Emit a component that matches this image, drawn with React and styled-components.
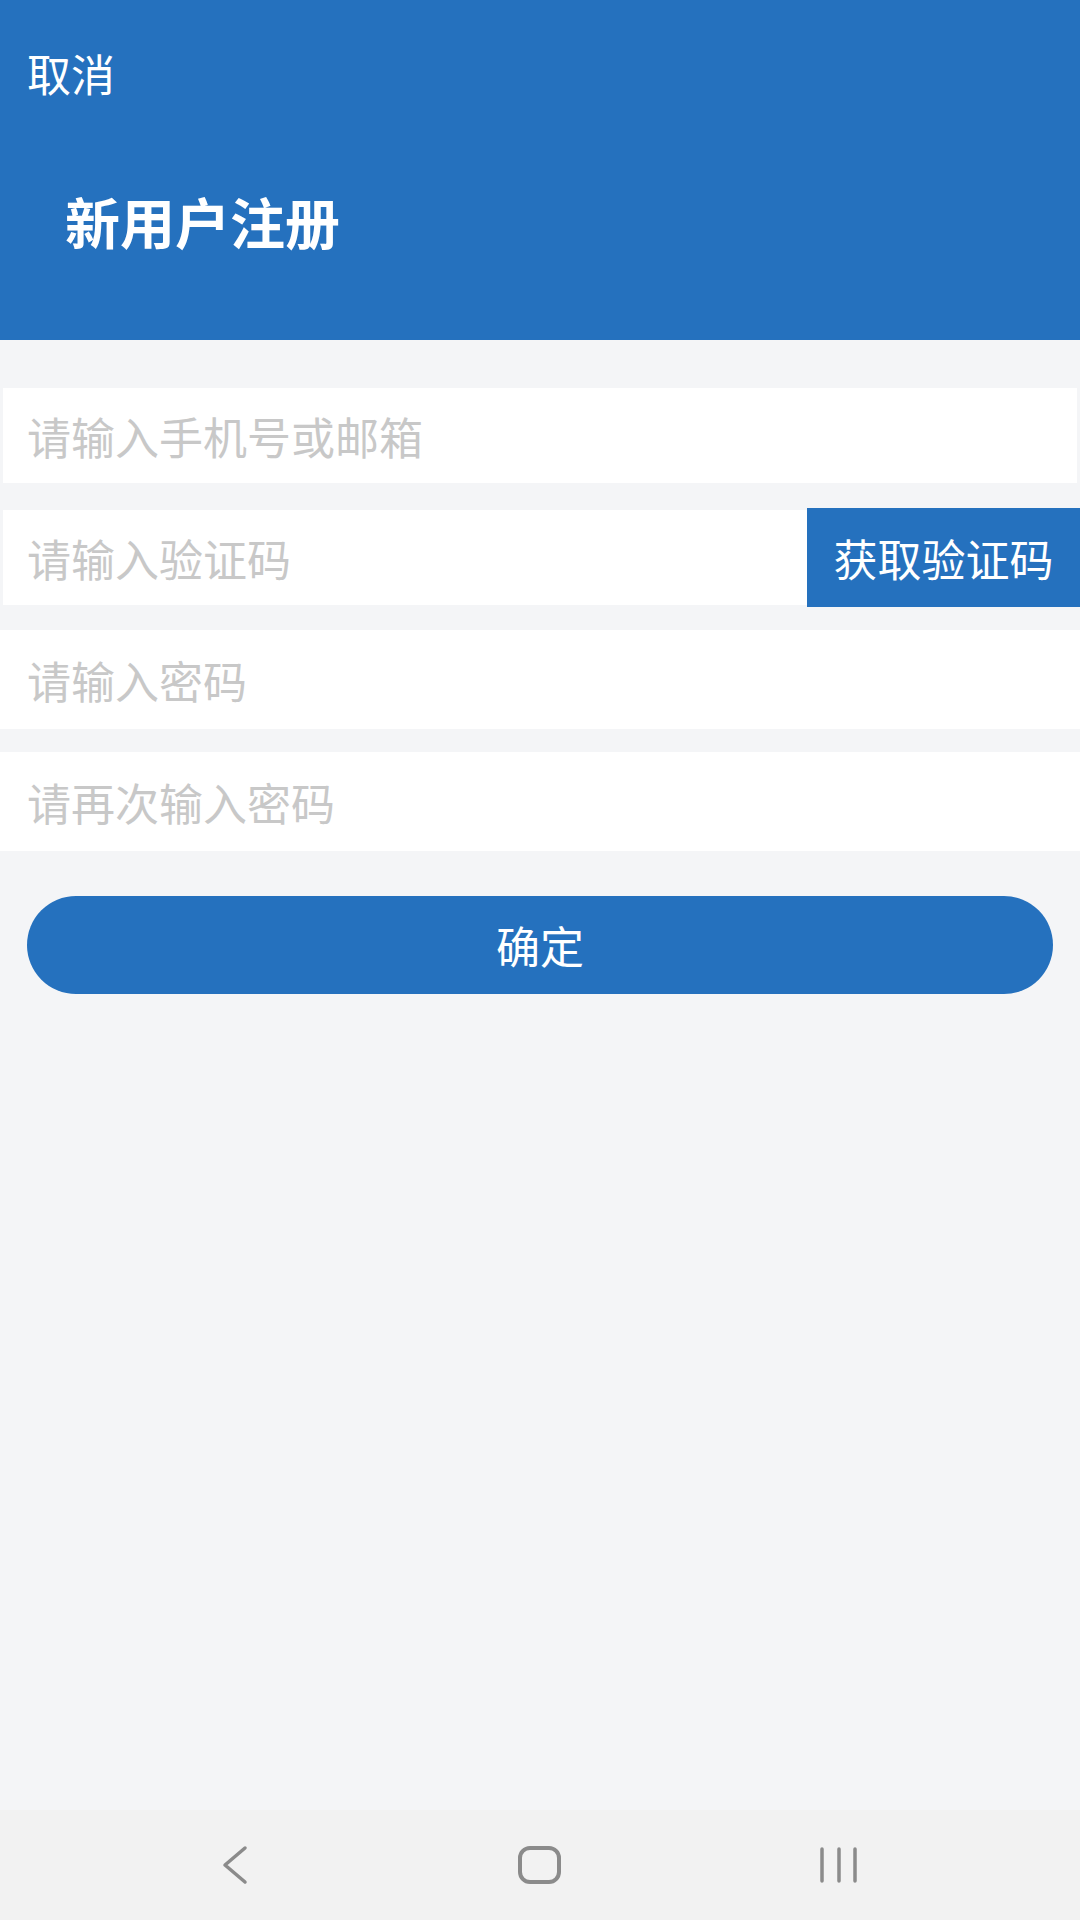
import React from "react";
import styled, { createGlobalStyle } from "styled-components";

const GlobalStyle = createGlobalStyle`
  html, body {
    margin: 0;
    padding: 0;
    background: #f4f5f7;
  }
  * {
    box-sizing: border-box;
  }
  body {
    font-family: "Noto Sans CJK SC", "Noto Sans", sans-serif;
  }
`;

const Screen = styled.div`
  width: 1080px;
  min-height: 1920px;
  display: flex;
  flex-direction: column;
  background: #f4f5f7;
`;

const Header = styled.header`
  height: 340px;
  background: #2571be;
  padding: 51px 27px 0;
  display: flex;
  flex-direction: column;
`;

const Cancel = styled.div`
  font-size: 44px;
  line-height: 44px;
  color: #fff;
`;

const Title = styled.h1`
  margin: 98px 0 0 38px;
  font-size: 55px;
  line-height: 55px;
  font-weight: 700;
  color: #fff;
`;

const Form = styled.main`
  flex: 1;
  display: flex;
  flex-direction: column;
  gap: 23px;
  padding-top: 46px;
`;

const Row = styled.div`
  height: 99px;
  display: flex;
  align-items: stretch;
  padding: ${(p) => (p.inset ? "2px 3px" : "0 0 0 3px")};
  padding-right: ${(p) => (p.flush || !p.inset ? "0" : "3px")};
  background: ${(p) => (p.inset ? "transparent" : "#fff")};
`;

const Input = styled.input`
  flex: 1;
  min-width: 0;
  border: 0;
  outline: none;
  background: #fff;
  padding: 0 0 0 24px;
  font-family: inherit;
  font-size: 44px;
  color: #333;

  &::placeholder {
    color: #c8c8c8;
  }
`;

const CodeButton = styled.button`
  width: 273px;
  margin: -2px 0;
  border: 0;
  background: #2571be;
  color: #fff;
  font-family: inherit;
  font-size: 44px;
  padding: 0;
`;

const Submit = styled.button`
  margin: 22px 27px 0;
  height: 98px;
  border: 0;
  border-radius: 49px;
  background: #2571be;
  color: #fff;
  font-family: inherit;
  font-size: 44px;
`;

const NavBar = styled.nav`
  height: 110px;
  background: #f2f2f2;
  display: flex;
  justify-content: center;
  align-items: center;
  gap: 242px;
`;

const NavIcon = styled.svg`
  width: 60px;
  height: 40px;
  stroke: #8b8b8b;
  fill: none;
  stroke-linecap: round;
  stroke-linejoin: round;
`;

export default function App() {
  return (
    <Screen>
      <GlobalStyle />
      <Header>
        <Cancel>取消</Cancel>
        <Title>新用户注册</Title>
      </Header>
      <Form>
        <Row inset>
          <Input placeholder="请输入手机号或邮箱" />
        </Row>
        <Row inset flush>
          <Input placeholder="请输入验证码" />
          <CodeButton>获取验证码</CodeButton>
        </Row>
        <Row>
          <Input type="password" placeholder="请输入密码" />
        </Row>
        <Row>
          <Input type="password" placeholder="请再次输入密码" />
        </Row>
        <Submit>确定</Submit>
      </Form>
      <NavBar>
        <NavIcon viewBox="0 0 60 40">
          <path d="M37 3 L17 20 L37 37" strokeWidth="3.5" />
        </NavIcon>
        <NavIcon viewBox="0 0 60 40">
          <rect x="10" y="3" width="39" height="34" rx="10" strokeWidth="4" />
        </NavIcon>
        <NavIcon viewBox="0 0 60 40">
          <path d="M10 4 V36 M27 4 V36 M43 4 V36" strokeWidth="3.5" />
        </NavIcon>
      </NavBar>
    </Screen>
  );
}
